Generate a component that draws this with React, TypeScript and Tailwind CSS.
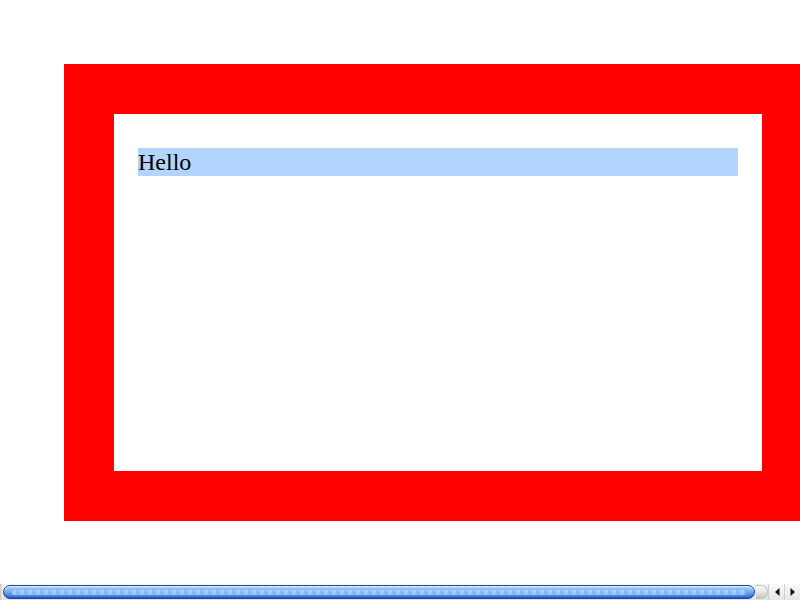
import React from "react";

export default function App() {
  return (
    <div className="w-[800px] h-[600px] bg-white flex flex-col overflow-hidden">
      <div className="h-[584px] overflow-hidden pt-[64px] pl-[64px]">
        <div className="w-[748px] h-[457px] border-[50px] border-[#ff0000] bg-white box-border pt-[34px] pl-[24px]">
          <div
            className="w-[600px] h-[28px] bg-[#b3d4fc] text-black text-[24px] leading-[28px]"
            style={{ fontFamily: '"Liberation Serif", "Times New Roman", serif' }}
          >
            Hello
          </div>
        </div>
      </div>
      <div className="h-[16px] flex items-stretch bg-gradient-to-b from-[#f4f4f2] to-[#e2e2de]">
        <div className="w-[3px] bg-gradient-to-r from-[#c8c8c4] to-[#f2f2f0]" />
        <div className="flex-1 py-[1px] pr-[1px]">
          <div className="h-full rounded-full border-[1.5px] border-[#1846b0] bg-gradient-to-b from-[#b4d4fa] via-[#6ea8ee] to-[#2f6fd6] shadow-[inset_0_1px_1px_rgba(255,255,255,0.7),inset_0_-1px_1px_rgba(20,60,160,0.5)] flex items-center px-[8px]">
            <div className="w-full h-[5px] bg-[repeating-linear-gradient(90deg,#b0d6fb_0px,#b0d6fb_4px,#8cc0f6_4px,#8cc0f6_8px)] opacity-80 rounded-full" />
          </div>
        </div>
        <div className="w-[12px] flex items-stretch py-[1px]">
          <div className="w-full rounded-r-full bg-gradient-to-b from-[#fbfbf9] via-[#e6e6e2] to-[#c4c4c0] border border-l-0 border-[#bebeba]" />
        </div>
        <div className="w-[16px] border-l border-[#d0d0cc] flex items-center justify-center bg-gradient-to-b from-[#fafaf8] to-[#e6e6e2]">
          <svg width="6" height="8" viewBox="0 0 6 8">
            <polygon points="5.5,0 5.5,8 1,4" fill="#111" />
          </svg>
        </div>
        <div className="w-[16px] border-l border-[#d0d0cc] flex items-center justify-center bg-gradient-to-b from-[#fafaf8] to-[#e6e6e2]">
          <svg width="6" height="8" viewBox="0 0 6 8">
            <polygon points="0.5,0 0.5,8 5,4" fill="#111" />
          </svg>
        </div>
      </div>
    </div>
  );
}
